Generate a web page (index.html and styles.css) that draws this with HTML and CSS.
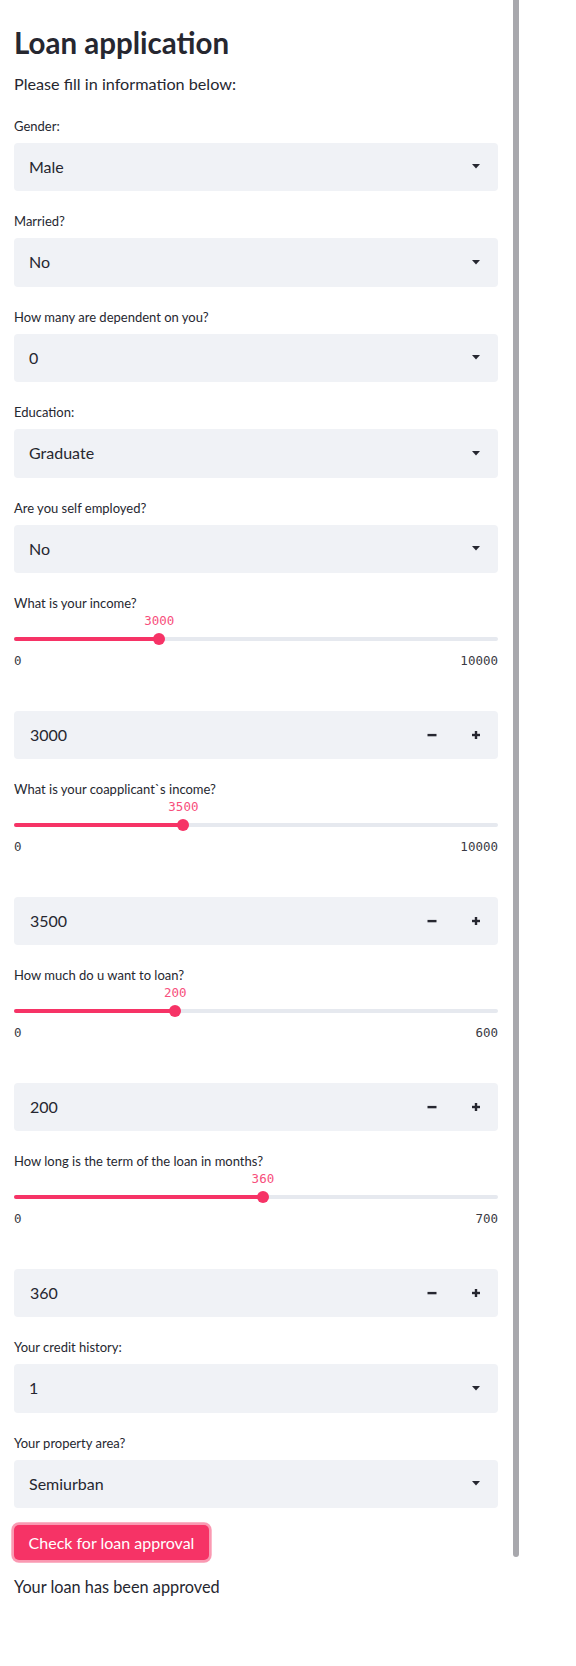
FILE: index.html
```html
<!DOCTYPE html>
<html lang="en">
<head>
<meta charset="utf-8">
<title>Loan application</title>
<link rel="stylesheet" href="styles.css">
</head>
<body>
<div class="app">
  <main class="main">
    <h1 class="title">Loan application</h1>
    <p class="lead">Please fill in information below:</p>

    <div class="stack">
      <div class="field">
        <div class="label">Gender:</div>
        <div class="select"><span>Male</span><svg class="caret" viewBox="0 0 8 5"><polygon points="0,0 8,0 4,4.5"/></svg></div>
      </div>
      <div class="field">
        <div class="label">Married?</div>
        <div class="select"><span>No</span><svg class="caret" viewBox="0 0 8 5"><polygon points="0,0 8,0 4,4.5"/></svg></div>
      </div>
      <div class="field">
        <div class="label">How many are dependent on you?</div>
        <div class="select"><span>0</span><svg class="caret" viewBox="0 0 8 5"><polygon points="0,0 8,0 4,4.5"/></svg></div>
      </div>
      <div class="field">
        <div class="label">Education:</div>
        <div class="select"><span>Graduate</span><svg class="caret" viewBox="0 0 8 5"><polygon points="0,0 8,0 4,4.5"/></svg></div>
      </div>
      <div class="field">
        <div class="label">Are you self employed?</div>
        <div class="select"><span>No</span><svg class="caret" viewBox="0 0 8 5"><polygon points="0,0 8,0 4,4.5"/></svg></div>
      </div>

      <div class="field">
        <div class="label label-tight">What is your income?</div>
        <div class="slider">
          <div class="value-lane"><span class="value" style="left:30%">3000</span></div>
          <div class="track"><div class="fill" style="width:30%"></div><div class="thumb" style="left:30%"></div></div>
          <div class="ticks"><span>0</span><span>10000</span></div>
        </div>
      </div>
      <div class="field">
        <div class="spacer"></div>
        <div class="number"><span>3000</span>
          <div class="steppers">
            <span class="step"><svg viewBox="0 0 10 10"><rect x="0.5" y="3.9" width="9" height="2.4"/></svg></span>
            <span class="step"><svg viewBox="0 0 10 10"><rect x="1" y="3.8" width="8" height="2.4"/><rect x="3.8" y="1" width="2.4" height="8"/></svg></span>
          </div>
        </div>
      </div>

      <div class="field">
        <div class="label label-tight">What is your coapplicant`s income?</div>
        <div class="slider">
          <div class="value-lane"><span class="value" style="left:35%">3500</span></div>
          <div class="track"><div class="fill" style="width:35%"></div><div class="thumb" style="left:35%"></div></div>
          <div class="ticks"><span>0</span><span>10000</span></div>
        </div>
      </div>
      <div class="field">
        <div class="spacer"></div>
        <div class="number"><span>3500</span>
          <div class="steppers">
            <span class="step"><svg viewBox="0 0 10 10"><rect x="0.5" y="3.9" width="9" height="2.4"/></svg></span>
            <span class="step"><svg viewBox="0 0 10 10"><rect x="1" y="3.8" width="8" height="2.4"/><rect x="3.8" y="1" width="2.4" height="8"/></svg></span>
          </div>
        </div>
      </div>

      <div class="field">
        <div class="label label-tight">How much do u want to loan?</div>
        <div class="slider">
          <div class="value-lane"><span class="value" style="left:33.333%">200</span></div>
          <div class="track"><div class="fill" style="width:33.333%"></div><div class="thumb" style="left:33.333%"></div></div>
          <div class="ticks"><span>0</span><span>600</span></div>
        </div>
      </div>
      <div class="field">
        <div class="spacer"></div>
        <div class="number"><span>200</span>
          <div class="steppers">
            <span class="step"><svg viewBox="0 0 10 10"><rect x="0.5" y="3.9" width="9" height="2.4"/></svg></span>
            <span class="step"><svg viewBox="0 0 10 10"><rect x="1" y="3.8" width="8" height="2.4"/><rect x="3.8" y="1" width="2.4" height="8"/></svg></span>
          </div>
        </div>
      </div>

      <div class="field">
        <div class="label label-tight">How long is the term of the loan in months?</div>
        <div class="slider">
          <div class="value-lane"><span class="value" style="left:51.43%">360</span></div>
          <div class="track"><div class="fill" style="width:51.43%"></div><div class="thumb" style="left:51.43%"></div></div>
          <div class="ticks"><span>0</span><span>700</span></div>
        </div>
      </div>
      <div class="field">
        <div class="spacer"></div>
        <div class="number"><span>360</span>
          <div class="steppers">
            <span class="step"><svg viewBox="0 0 10 10"><rect x="0.5" y="3.9" width="9" height="2.4"/></svg></span>
            <span class="step"><svg viewBox="0 0 10 10"><rect x="1" y="3.8" width="8" height="2.4"/><rect x="3.8" y="1" width="2.4" height="8"/></svg></span>
          </div>
        </div>
      </div>

      <div class="field">
        <div class="label">Your credit history:</div>
        <div class="select"><span>1</span><svg class="caret" viewBox="0 0 8 5"><polygon points="0,0 8,0 4,4.5"/></svg></div>
      </div>
      <div class="field">
        <div class="label">Your property area?</div>
        <div class="select"><span>Semiurban</span><svg class="caret" viewBox="0 0 8 5"><polygon points="0,0 8,0 4,4.5"/></svg></div>
      </div>
    </div>

    <button class="primary" type="button">Check for loan approval</button>
    <p class="result">Your loan has been approved</p>
  </main>
  <div class="scrollbar"></div>
</div>
</body>
</html>
```

FILE: styles.css
```css
* { box-sizing: border-box; }

html, body {
  margin: 0;
  padding: 0;
  background: #ffffff;
}

body {
  font-family: "Source Sans Pro", Lato, "Noto Sans", sans-serif;
  color: #262730;
}

.app {
  display: flex;
  align-items: flex-start;
}

.main {
  width: 498px;
  padding: 22.5px 0 0 14px;
  flex: none;
}

.title {
  margin: 0;
  font-size: 29.5px;
  line-height: 40px;
  font-weight: 700;
  color: #262730;
}

.lead {
  margin: 9px 0 0;
  font-size: 16.2px;
  line-height: 24px;
}

.stack {
  margin-top: 22px;
  display: flex;
  flex-direction: column;
  gap: 22px;
}

.field {
  display: flex;
  flex-direction: column;
}

.label {
  font-size: 13px;
  line-height: 16px;
  height: 16px;
  margin-bottom: 9px;
  color: #262730;
  white-space: nowrap;
}

.label-tight {
  margin-bottom: 0;
}

.spacer {
  height: 21px;
}

.select,
.number {
  height: 48.5px;
  background: #f0f2f6;
  border-radius: 4px;
  display: flex;
  align-items: center;
  justify-content: space-between;
  font-size: 16px;
  line-height: 20px;
}

.select {
  padding: 0 18px 0 15px;
}

.caret {
  width: 8px;
  height: 5px;
  fill: #262730;
}

.number {
  padding-left: 16px;
}

.steppers {
  display: flex;
  height: 100%;
}

.step {
  width: 44px;
  height: 100%;
  display: flex;
  align-items: center;
  justify-content: center;
}

.step svg {
  width: 10px;
  height: 10px;
  fill: #262730;
}

.slider {
  display: flex;
  flex-direction: column;
}

.value-lane {
  position: relative;
  height: 25.5px;
}

.value {
  position: absolute;
  top: 1.8px;
  transform: translateX(-50%);
  font-family: "DejaVu Sans Mono", monospace;
  font-size: 12.5px;
  line-height: 15px;
  color: #f74f7c;
  white-space: nowrap;
}

.track {
  position: relative;
  height: 4px;
  border-radius: 2px;
  background: #e6e9ef;
}

.fill {
  height: 100%;
  border-radius: 2px;
  background: #f63366;
}

.thumb {
  position: absolute;
  top: -4px;
  width: 12px;
  height: 12px;
  margin-left: -6px;
  border-radius: 50%;
  background: #f63366;
}

.ticks {
  margin-top: 12px;
  display: flex;
  justify-content: space-between;
  font-family: "DejaVu Sans Mono", monospace;
  font-size: 12.5px;
  line-height: 15px;
  color: #3a3b44;
}

.primary {
  display: block;
  margin: 16.5px 0 0;
  width: 195px;
  height: 35px;
  padding: 0;
  border: none;
  border-radius: 5px;
  background: #f63366;
  color: #ffffff;
  font-family: "Source Sans Pro", Lato, "Noto Sans", sans-serif;
  font-size: 16px;
  line-height: 35px;
  text-align: center;
  box-shadow: 0 0 0 2.7px rgba(246, 51, 102, 0.5);
}

.result {
  margin: 15.8px 0 0;
  font-size: 16.3px;
  line-height: 24px;
}

.scrollbar {
  flex: none;
  width: 6px;
  height: 1557px;
  margin-left: 15px;
  background: #a8a8ad;
  border-radius: 0 0 3px 3px;
}
```
